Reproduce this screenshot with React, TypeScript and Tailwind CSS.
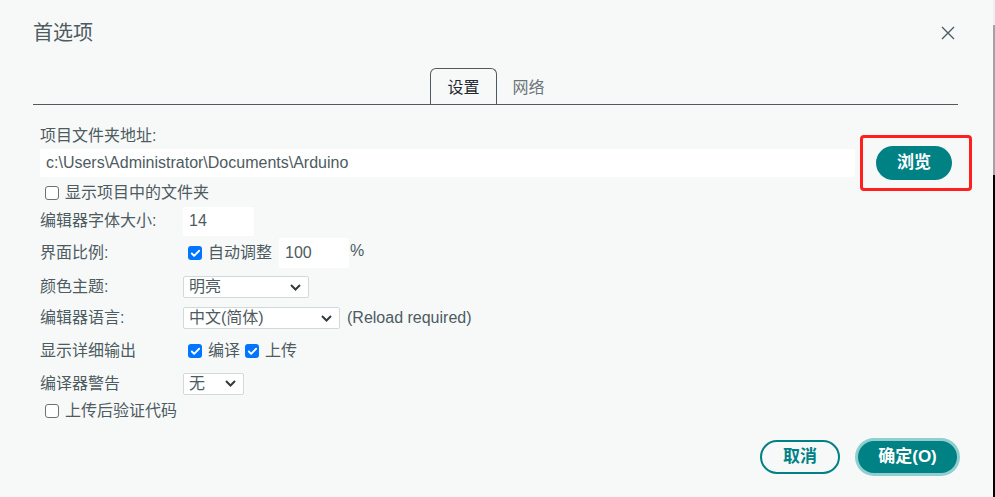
import { Check } from "lucide-react";

const FONT = { fontFamily: '"Liberation Sans", "Noto Sans CJK SC", sans-serif' };

function Box({ checked }: { checked?: boolean }) {
  if (checked) {
    return (
      <span className="w-[14px] h-[14px] rounded-[3px] bg-[#0075ff] flex items-center justify-center shrink-0">
        <Check size={11} strokeWidth={4} className="text-white" />
      </span>
    );
  }
  return <span className="w-[14px] h-[14px] rounded-[3px] border border-[#6b7378] bg-white shrink-0" />;
}

function Select({ value, width }: { value: string; width: string }) {
  return (
    <div className={`${width} h-[22px] bg-white border border-[#d3d9db] rounded-[2px] flex items-center justify-between pl-[5px] pr-[7px]`}>
      <span>{value}</span>
      <svg width="11" height="7" viewBox="0 0 11 7">
        <polyline points="1,1 5.5,5.5 10,1" fill="none" stroke="#333a3e" strokeWidth="2" />
      </svg>
    </div>
  );
}

function Row({ label, h, children }: { label: string; h: string; children: React.ReactNode }) {
  return (
    <div className={`flex items-center ${h}`}>
      <div className="w-[143px] shrink-0">{label}</div>
      {children}
    </div>
  );
}

export default function App() {
  return (
    <div className="w-[995px] h-[497px] flex bg-[#f7f9f9] overflow-hidden text-[16px] text-[#4e5b61]" style={FONT}>
      <div className="w-[993px] pl-[33px] pr-[35px] pt-[19px]">
        {/* header */}
        <div className="flex items-center justify-between h-[28px]">
          <span className="text-[20px] text-[#4e5b61]">首选项</span>
          <svg width="14" height="14" viewBox="0 0 14 14" className="mr-[3px]">
            <path d="M1 1 L13 13 M13 1 L1 13" stroke="#4e5b61" strokeWidth="1.4" />
          </svg>
        </div>

        {/* tabs */}
        <div className="mt-[21px] flex justify-center border-b border-[#4e5b61]">
          <div className="h-[36px] px-[16px] flex items-center pt-[3px] border border-b-0 border-[#4e5b61] rounded-t-[6px] -mb-px bg-[#f7f9f9] text-[#1f2a30]">
            设置
          </div>
          <div className="h-[36px] px-[16px] flex items-center pt-[3px] text-[#6b7579]">网络</div>
        </div>

        <div className="pl-[7px] pt-[21px]">
          <div className="h-[20px] leading-[20px]">项目文件夹地址:</div>
          <div className="mt-[3px] h-[28px] flex items-center">
            <div className="w-[815px] h-[28px] bg-white rounded-[2px] px-[6px] flex items-center">
              c:\Users\Administrator\Documents\Arduino
            </div>
            <div className="relative ml-[21px]">
              <button className="w-[76px] h-[34px] rounded-full bg-[#008184] text-white font-bold text-[17px] flex items-center justify-center">
                浏览
              </button>
              <div className="absolute -left-[16px] -right-[20px] -top-[11px] -bottom-[11px] border-[3px] border-[#ff1f1f] rounded-[4px]" />
            </div>
          </div>

          <div className="mt-[5px] h-[22px] flex items-center pl-[5px] gap-[6px]">
            <Box />
            <span>显示项目中的文件夹</span>
          </div>

          <div className="mt-[1px]">
            <Row label="编辑器字体大小:" h="h-[32px]">
              <div className="w-[71px] h-[29px] bg-white rounded-[2px] px-[6px] flex items-center">14</div>
            </Row>
            <Row label="界面比例:" h="h-[32px]">
              <div className="flex items-center pl-[5px]">
                <Box checked />
                <span className="ml-[6px]">自动调整</span>
                <div className="ml-[7px] w-[70px] h-[30px] bg-white rounded-[2px] px-[6px] flex items-center">100</div>
                <span className="ml-[1px] -mt-[4px]">%</span>
              </div>
            </Row>
            <Row label="颜色主题:" h="h-[36px]">
              <Select value="明亮" width="w-[126px]" />
            </Row>
            <Row label="编辑器语言:" h="h-[26px]">
              <Select value="中文(简体)" width="w-[157px]" />
              <span className="ml-[7px]">(Reload required)</span>
            </Row>
            <Row label="显示详细输出" h="h-[40px]">
              <div className="flex items-center pl-[5px]">
                <Box checked />
                <span className="ml-[6px]">编译</span>
                <span className="ml-[5px]">
                  <Box checked />
                </span>
                <span className="ml-[6px]">上传</span>
              </div>
            </Row>
            <Row label="编译器警告" h="h-[25px]">
              <Select value="无" width="w-[61px]" />
            </Row>
          </div>
          <div className="h-[30px] flex items-center pl-[5px] gap-[6px]">
            <Box />
            <span>上传后验证代码</span>
          </div>

          <div className="mt-[14px] flex justify-end items-center gap-[18px] -mr-[2px] pr-[3px]">
            <button className="w-[80px] h-[34px] rounded-full border-2 border-[#008184] text-[#008184] font-bold text-[17px] flex items-center justify-center">
              取消
            </button>
            <button className="w-[99px] h-[32px] rounded-full bg-[#008184] ring-[3px] ring-[#8fcfd0] text-white font-bold text-[17px] flex items-center justify-center">
              确定(O)
            </button>
          </div>
        </div>
      </div>

      {/* edge of the window behind */}
      <div className="w-[2px] flex flex-col">
        <div className="h-[25px] bg-[#eef0f0]" />
        <div className="h-[150px] bg-[#a3a3a3]" />
        <div className="flex-1 bg-black" />
      </div>
    </div>
  );
}
